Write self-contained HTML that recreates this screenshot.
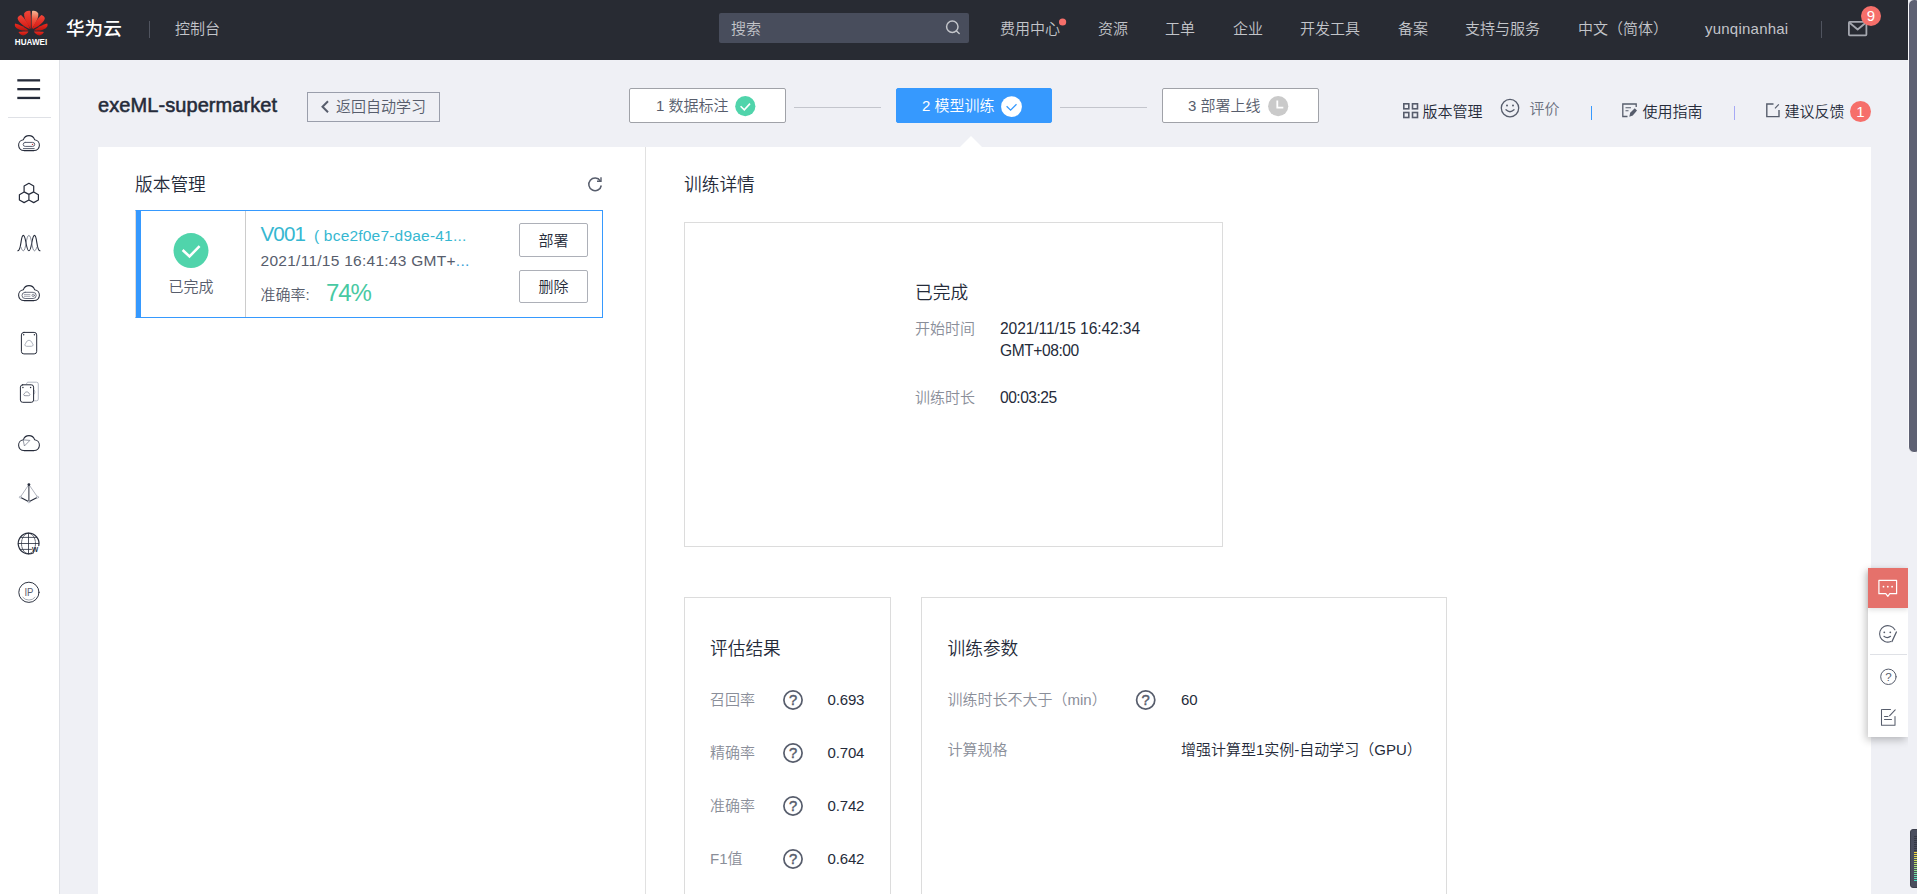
<!DOCTYPE html>
<html lang="zh-CN">
<head>
<meta charset="utf-8">
<title>ModelArts</title>
<style>
*{box-sizing:border-box;margin:0;padding:0}
html,body{width:1917px;height:894px;overflow:hidden;background:#eff0f5}
body{position:relative;font-family:"Liberation Sans","Noto Sans CJK SC",sans-serif;font-size:15px;color:#252b3a;line-height:20px;font-weight:350}
.a{position:absolute;white-space:nowrap}
svg{position:absolute;overflow:visible}
/* header */
#hdr{position:absolute;left:0;top:0;width:1908px;height:60px;background:#282b33}
#hdr .t{position:absolute;top:19px;height:20px;line-height:20px;color:#c3c5ca;white-space:nowrap}
#search{position:absolute;left:719px;top:13px;width:250px;height:30px;background:#484d5c;border-radius:2px}
.badge{position:absolute;border-radius:50%;background:#f66f6a;color:#fff;text-align:center}
/* sidebar */
#side{position:absolute;left:0;top:60px;width:60px;height:834px;background:#fff;border-right:1px solid #dfe1e6}
/* main */
#panel{position:absolute;left:98px;top:147px;width:1773px;height:747px;background:#fff}
.step{position:absolute;top:88px;height:35px;border:1px solid #a0a2a8;border-radius:2px;background:#fff}
.box{position:absolute;border:1px solid #dcdcdc;background:#fff}
.lbl{color:#8a8e99}
.btn{position:absolute;border:1px solid #adb0b8;border-radius:2px;background:#fff;text-align:center}
</style>
</head>
<body>
<!-- page sections are inserted below -->
<div id="hdr">
<div class="t" style="left:66px;top:18px;font-size:18.600px;font-weight:500;color:#fff;line-height:22px">华为云</div>
<div class="t" style="left:175px">控制台</div>
<div id="search"><div class="t" style="left:12px;top:5.500px;color:#c3c5ca">搜索</div></div>
<div class="t" style="left:1000px">费用中心</div>
<div class="t" style="left:1098px">资源</div>
<div class="t" style="left:1165px">工单</div>
<div class="t" style="left:1233px">企业</div>
<div class="t" style="left:1300px">开发工具</div>
<div class="t" style="left:1398px">备案</div>
<div class="t" style="left:1465px">支持与服务</div>
<div class="t" style="left:1578px">中文（简体）</div>
<div class="t" style="left:1705px;letter-spacing:0.230px">yunqinanhai</div>
<svg width="1908" height="60" viewBox="0 0 1908 60" style="left:0;top:0">
<defs>
<linearGradient id="lg1" x1="0" y1="0" x2="0" y2="1"><stop offset="0" stop-color="#f0463a"/><stop offset="1" stop-color="#d5160f"/></linearGradient>
<linearGradient id="lg2" x1="0" y1="0" x2="0" y2="1"><stop offset="0" stop-color="#f7b896"/><stop offset="0.45" stop-color="#ee5a42"/><stop offset="1" stop-color="#e01f14"/></linearGradient>
<linearGradient id="lg3" x1="0" y1="0" x2="0" y2="1"><stop offset="0" stop-color="#ec2c20"/><stop offset="1" stop-color="#b5140f"/></linearGradient>
</defs>
<g>
<path fill="url(#lg1)" d="M30.700,29 C28.300,25.500 23.200,18 24.200,13.600 C24.800,11.300 28.200,10.200 30.400,11 C31,16 31,24 30.700,29Z"/>
<path fill="url(#lg2)" d="M31.800,29 C34.200,25.500 39.200,18 38.200,13.600 C37.600,11.300 34.200,10.200 32.100,11 C31.500,16 31.500,24 31.800,29 Z"/>
<path fill="url(#lg1)" d="M29.900,29.300 C25,27.200 18.200,22.500 17.600,18.600 C17.600,16.600 19.400,15.300 21,15 C24.500,18 28.600,24 29.900,29.300Z"/>
<path fill="url(#lg1)" d="M32.50,29.30 C37.40,27.20 44.20,22.50 44.80,18.60 C44.80,16.60 43.00,15.30 41.40,15.00 C37.90,18.00 33.80,24.00 32.50,29.30 Z"/>
<path fill="url(#lg3)" d="M28.600,30.600 C24,31.200 17.200,30.200 15.200,26.600 C14.700,25.400 14.700,24.200 15.200,23.400 C19,24.200 26.200,27.800 28.600,30.600Z"/>
<path fill="url(#lg3)" d="M33.80,30.60 C38.40,31.20 45.20,30.20 47.20,26.60 C47.70,25.40 47.70,24.20 47.20,23.40 C43.40,24.20 36.20,27.80 33.80,30.60 Z"/>
<path fill="url(#lg3)" d="M28.500,31.600 C25,31.300 21,31.500 18.500,32.100 C19.300,33.900 21,35.200 23,35.400 C25.400,35.400 27.800,33.300 28.500,31.600Z"/>
<path fill="url(#lg3)" d="M33.90,31.60 C37.40,31.30 41.40,31.50 43.90,32.10 C43.10,33.90 41.40,35.20 39.40,35.40 C37.00,35.40 34.60,33.30 33.90,31.60 Z"/>
</g>
<text x="14.8" y="45.1" font-family="Liberation Sans,sans-serif" font-weight="bold" font-size="9.2" fill="#fff" textLength="32.4" lengthAdjust="spacingAndGlyphs">HUAWEI</text>
<rect x="149" y="21" width="1" height="17" fill="#50545f"/>
<rect x="1821" y="21" width="1" height="17" fill="#50545f"/>
<g fill="none" stroke="#c3c5ca" stroke-width="1.5"><circle cx="952.3" cy="26.8" r="5.7"/><path d="M956.5,31 L959.2,33.5" stroke-linecap="round"/></g>
<g fill="none" stroke="#a4a7af" stroke-width="1.8" stroke-linejoin="round"><rect x="1848.9" y="21.9" width="17.5" height="13.4" rx="0.8"/><path d="M1849.300,22.500 L1857.650,29.500 L1866,22.500"/></g>
<circle cx="1062.600" cy="22" r="3.600" fill="#f66f6a"/>
</svg>
<div class="badge" style="left:1861px;top:6px;width:20px;height:20px;line-height:20px;font-size:15px">9</div>
</div>
<div id="side">
<svg width="60" height="834" viewBox="0 60 60 834" style="left:0;top:0" fill="none" stroke="#252b3a" stroke-width="1.050" stroke-linejoin="round" stroke-linecap="round">
<g stroke="none" fill="#252b3a"><rect x="17.300" y="79.200" width="22.800" height="2.300"/><rect x="17.300" y="88" width="22.800" height="2.300"/><rect x="17.300" y="96.800" width="22.800" height="2.300"/></g>
<rect x="8" y="117" width="43" height="1" fill="#dfe1e6" stroke="none"/>
<!-- 1 cloud server -->
<path d="M23.9,150.60 A5.5,5.5 0 0 1 23.4,139.65 A5.9,5.9 0 0 1 34.6,139.65 A5.5,5.5 0 0 1 34.1,150.60 Z"/>
<rect x="23.200" y="142.400" width="11.500" height="4" rx="2" stroke-width="1" stroke="#5a6070"/>
<path d="M23.400,148.600 H34.200" stroke-width="1" stroke="#5a6070"/>
<circle cx="32.500" cy="144.400" r="0.700" fill="#c03030" stroke="none"/>
<!-- 2 hexagons -->
<path d="M28.900,183.300 L33.700,186 V191.900 L28.900,194.400 L24.100,191.900 V186 Z M24.100,191.900 L19.400,194.700 V200 L24.100,202.600 L28.900,200 V194.400 M33.700,191.900 L38.400,194.700 V200 L33.700,202.600 L28.900,200" stroke-width="1.200"/>
<!-- 3 waves -->
<path d="M17.800,250.800 C21.500,250.800 20.500,235.400 23.300,235.400 C26.100,235.400 26,250.800 28.900,250.800 C31.800,250.800 31.700,235.400 34.500,235.400 C37.300,235.400 36.300,250.800 40,250.800" stroke-width="1.100"/>
<path d="M20.800,247 C22,250 22.600,250.800 23.300,250.800 C26.100,250.800 26,235.400 28.900,235.400 C31.800,235.400 31.700,250.800 34.500,250.800 C35.200,250.800 35.800,250 37,247" stroke-width="0.800" stroke="#6a7080"/>
<!-- 4 cloud disk -->
<path d="M23.9,300.60 A5.5,5.5 0 0 1 23.4,289.65 A5.9,5.9 0 0 1 34.6,289.65 A5.5,5.5 0 0 1 34.1,300.60 Z"/>
<rect x="22" y="292.300" width="14.200" height="6.200" rx="3.100" stroke-width="0.900" stroke="#5a6070"/>
<path d="M24.300,294.600 H30 M24.300,296.300 H30" stroke-width="0.700" stroke="#7a8090"/>
<circle cx="33.200" cy="295.400" r="1.200" stroke-width="0.700" stroke="#5a6070"/>
<!-- 5 disk -->
<rect x="21.400" y="332.400" width="15.300" height="21.500" rx="2.500" stroke-width="1"/>
<circle cx="23.700" cy="334.700" r="0.700" fill="#252b3a" stroke="none"/><circle cx="34.400" cy="334.700" r="0.700" fill="#252b3a" stroke="none"/>
<path d="M26.200,346.300 C24.600,346.300 24.300,344 25.800,343.300 C26.300,341.300 27.800,340.300 29,340.300 C30.200,340.300 31.700,341.300 32.200,343.300 C33.700,344 33.400,346.300 31.800,346.300 Z" stroke-width="0.700" stroke="#8a90a0"/>
<!-- 6 double disk -->
<path d="M26.500,383.800 L27.500,382.200 H36.500 Q38.300,382.200 38.300,384 V399 Q38.300,400.800 36.500,400.800 H34.400" stroke-width="0.800" stroke="#a0a6b4"/>
<path d="M34.400,390.200 Q35.800,392 34.400,394" stroke-width="0.700" stroke="#a0a6b4"/>
<rect x="20.400" y="384.800" width="13.200" height="17.500" rx="2.300" stroke-width="1"/>
<circle cx="22.900" cy="387.500" r="0.700" fill="#252b3a" stroke="none"/><circle cx="30.600" cy="387.500" r="0.700" fill="#252b3a" stroke="none"/>
<path d="M24.600,395.700 C23.500,395.700 23.300,394.200 24.300,393.700 C24.800,392.500 25.800,391.900 26.800,391.900 C27.800,391.900 28.800,392.500 29.300,393.700 C30.300,394.200 30.100,395.700 29,395.700 Z" stroke-width="0.700" stroke="#6a7080"/>
<!-- 7 cloud arrow -->
<path d="M23.9,450.60 A5.5,5.5 0 0 1 23.4,439.65 A5.9,5.9 0 0 1 34.6,439.65 A5.5,5.5 0 0 1 34.1,450.60 Z"/>
<path d="M23.500,439.900 L29.900,440.400 L24.700,445.700 Z" stroke-width="0.700" stroke="#6a7080"/>
<!-- 8 pyramid -->
<path d="M28.900,484.500 L20.300,497.200 M28.900,484.500 L37.600,497.200" stroke-width="0.600" stroke="#7a8090"/>
<path d="M28.900,484.500 V501.800" stroke-width="1"/>
<path d="M20.300,497.200 L28.900,501.800 L37.600,497.200" stroke-width="1.100"/>
<circle cx="28.900" cy="484.600" r="1.400" fill="#252b3a" stroke="none"/>
<g fill="#fff" stroke-width="0.500" stroke="#8a90a0"><circle cx="20.300" cy="497.200" r="1"/><circle cx="37.600" cy="497.200" r="1"/><circle cx="28.900" cy="501.900" r="1"/></g>
<!-- 9 globe -->
<path d="M33.500,552.700 A10.400,10.400 0 1 1 38.800,545.600" stroke-width="1.200"/>
<ellipse cx="28.500" cy="543.500" rx="7" ry="10.200" stroke-width="0.700" stroke-dasharray="2.500 1"/>
<path d="M28.500,533.200 V553.800 M18.300,543.500 H38.700 M20.300,537.400 H36.700 M20.300,549.400 H31.500" stroke-width="0.800"/>
<text x="32" y="552.400" font-family="Liberation Sans,sans-serif" font-size="6.500" font-weight="bold" fill="#252b3a" stroke="none">W</text>
<!-- 10 IP -->
<circle cx="28.900" cy="592.300" r="10.100" stroke-width="0.950"/>
<path d="M22.800,597.300 A7.800,7.800 0 0 0 35,597.300" stroke-width="0.600" stroke="#6a7080"/>
<text x="28.900" y="596" text-anchor="middle" font-family="Liberation Sans,sans-serif" font-size="10.500" fill="#5a6070" stroke="none" textLength="9" lengthAdjust="spacingAndGlyphs">IP</text>
</svg>
</div>
<div id="main">
<div class="a" style="left:98px;top:93px;font-size:20px;line-height:24px;letter-spacing:0.080px;-webkit-text-stroke:0.550px #252b3a">exeML-supermarket</div>
<div class="btn" style="left:307px;top:92px;width:133px;height:30px;border-color:#9a9eab;background:transparent;border-radius:0"></div>
<svg width="10" height="14" viewBox="0 0 10 14" style="left:320px;top:100px" fill="none" stroke="#575d6c" stroke-width="2"><path d="M8,1.300 L2.500,6.800 L8,12.300"/></svg>
<div class="a" style="left:336px;top:97px;color:#575d6c">返回自动学习</div>
<!-- steps -->
<div class="step" style="left:629px;width:157px"></div>
<div class="a" style="left:656px;top:96px;color:#575d6c">1 数据标注</div>
<svg width="21" height="21" viewBox="0 0 21 21" style="left:735px;top:96px"><circle cx="10.300" cy="10.200" r="10.100" fill="#50d4ab"/><path d="M5.600,10.200 L9.300,13.800 L15,7.600" fill="none" stroke="#fff" stroke-width="1.600"/></svg>
<div class="a" style="left:794px;top:107px;width:87px;height:1px;background:#c3c5cc"></div>
<div class="step" style="left:896px;width:156px;background:#3699fe;border-color:#3699fe"></div>
<div class="a" style="left:922px;top:96px;color:#fff">2 模型训练</div>
<svg width="22" height="22" viewBox="0 0 22 22" style="left:1001px;top:95.500px"><circle cx="10.500" cy="10.700" r="10.400" fill="#fff"/><path d="M5.600,10.300 L9.600,14.100 L15.500,8.200" fill="none" stroke="#3699fe" stroke-width="1.300"/></svg>
<div class="a" style="left:1060px;top:107px;width:87px;height:1px;background:#c3c5cc"></div>
<div class="step" style="left:1162px;width:157px"></div>
<div class="a" style="left:1188px;top:96px;color:#575d6c">3 部署上线</div>
<svg width="21" height="21" viewBox="0 0 21 21" style="left:1267.500px;top:96px"><circle cx="10.200" cy="10.200" r="10.100" fill="#cacaca"/><path d="M9.300,4.500 V11.700 H15.300" fill="none" stroke="#fff" stroke-width="1.800"/></svg>
<svg width="24" height="12" viewBox="0 0 24 12" style="left:958.500px;top:135.500px"><path d="M0,12 L12,0 L24,12 Z" fill="#fff"/></svg>
<!-- actions -->
<svg width="16" height="16" viewBox="0 0 16 16" style="left:1402.500px;top:102.500px" fill="none" stroke="#575d6c" stroke-width="1.600"><rect x="0.800" y="0.800" width="5" height="5"/><rect x="9.500" y="0.800" width="5" height="5"/><rect x="0.800" y="9.500" width="5" height="5"/><rect x="9.500" y="9.500" width="5" height="5"/></svg>
<div class="a" style="left:1422.500px;top:101.500px">版本管理</div>
<svg width="20" height="20" viewBox="0 0 20 20" style="left:1499.500px;top:98px" fill="none" stroke="#575d6c" stroke-width="1.300"><circle cx="10" cy="10.100" r="8.700"/><path d="M6,11.800 Q10,15.600 14,11.800" stroke-linecap="round"/><circle cx="7" cy="7.600" r="1" fill="#575d6c" stroke="none"/><circle cx="13" cy="7.600" r="1" fill="#575d6c" stroke="none"/></svg>
<div class="a" style="left:1529.500px;top:98.500px;color:#6b7180">评价</div>
<div class="a" style="left:1591px;top:106px;width:1px;height:14px;background:#3699fe"></div>
<svg width="16" height="15" viewBox="0 0 16 15" style="left:1622px;top:103px" fill="none" stroke="#575d6c" stroke-width="1.300"><path d="M14.200,4 V1 H0.800 V13.500 H5.500"/><path d="M3.500,4.800 H9 M3.500,7.800 H6.500" stroke-width="1.100"/><path d="M7.300,13.800 L8.200,9.800 L12.800,5.200 L15,7.400 L10.800,12.500 Z" fill="#575d6c" stroke="none"/></svg>
<div class="a" style="left:1642.500px;top:101.500px">使用指南</div>
<div class="a" style="left:1733.500px;top:106px;width:1px;height:14px;background:#a6a9f5"></div>
<svg width="15" height="15" viewBox="0 0 15 15" style="left:1766px;top:103px" fill="none" stroke="#575d6c" stroke-width="1.400"><path d="M7.500,1 H0.800 V13.600 H13 V7"/><path d="M9,5.300 L12.800,1.300" stroke-width="1.200"/></svg>
<div class="a" style="left:1784.500px;top:101.500px">建议反馈</div>
<div class="badge" style="left:1850px;top:101px;width:21px;height:21px;line-height:21px;font-size:15px">1</div>
</div>
<div id="panel">
<div class="a" style="left:547px;top:0;width:1px;height:747px;background:#e1e1e1"></div>
<!-- left -->
<div class="a" style="left:37px;top:26px;font-size:17.700px;line-height:24px">版本管理</div>
<svg width="16" height="16" viewBox="0 0 16 16" style="left:489px;top:29px" fill="none" stroke="#575d6c" stroke-width="1.500"><path d="M13.300,4.800 A6.300,6.300 0 1 0 14.300,9.500"/><path d="M10,5.300 H14 V1.200" stroke-width="1.400"/></svg>
<div class="a" style="left:37px;top:63px;width:468px;height:108px;border:1px solid #3699fe;border-left-color:#e2dcd8;background:#fff"></div>
<div class="a" style="left:38px;top:63px;width:5px;height:108px;background:#3699fe"></div>
<div class="a" style="left:147px;top:64px;width:1px;height:106px;background:#ccc"></div>
<svg width="36" height="36" viewBox="0 0 36 36" style="left:75px;top:86px"><circle cx="18" cy="17.600" r="17.500" fill="#50d4ab"/><path d="M9.600,17 L16.500,23.500 L26.600,13.200" fill="none" stroke="#fff" stroke-width="2.500"/></svg>
<div class="a" style="left:70.500px;top:129.500px;color:#575d6c">已完成</div>
<div class="a" style="left:162.500px;top:75px;font-size:20.600px;line-height:24px;color:#36b7d1;letter-spacing:-0.900px">V001</div>
<div class="a" style="left:216px;top:79px;font-size:15.500px;letter-spacing:0.200px;color:#36b7d1">( bce2f0e7-d9ae-41...</div>
<div class="a" style="left:162.500px;top:104px;font-size:15.500px;letter-spacing:0.270px;color:#575d6c">2021/11/15 16:41:43 GMT+<span style="color:#36a0d8">...</span></div>
<div class="a" style="left:162.500px;top:138px;color:#575d6c">准确率:</div>
<div class="a" style="left:228px;top:132px;font-size:24px;line-height:28px;color:#48c9a3;letter-spacing:-1.100px">74%</div>
<div class="btn" style="left:421px;top:76px;width:69px;height:34px"></div>
<div class="a" style="left:440.500px;top:84px">部署</div>
<div class="btn" style="left:421px;top:123px;width:69px;height:33px"></div>
<div class="a" style="left:440.500px;top:129.500px">删除</div>
<!-- right -->
<div class="a" style="left:586px;top:26px;font-size:17.700px;line-height:24px">训练详情</div>
<div class="box" style="left:586px;top:75px;width:539px;height:325px"></div>
<div class="a" style="left:817px;top:133.500px;font-size:17.700px;line-height:24px">已完成</div>
<div class="a lbl" style="left:817px;top:171.500px">开始时间</div>
<div class="a" style="left:902px;top:172px;font-size:15.600px;letter-spacing:-0.100px">2021/11/15 16:42:34</div>
<div class="a" style="left:902px;top:194px;font-size:15.600px;letter-spacing:-0.450px">GMT+08:00</div>
<div class="a lbl" style="left:817px;top:240.500px">训练时长</div>
<div class="a" style="left:902px;top:241px;font-size:15.600px;letter-spacing:-0.500px">00:03:25</div>
<div class="box" style="left:586px;top:450px;width:207px;height:320px"></div>
<div class="a" style="left:612px;top:489.500px;font-size:17.700px;line-height:24px">评估结果</div>
<div class="a lbl" style="left:612px;top:543px">召回率</div>
<div class="a lbl" style="left:612px;top:596px">精确率</div>
<div class="a lbl" style="left:612px;top:649px">准确率</div>
<div class="a lbl" style="left:612px;top:702px">F1值</div>
<div class="a" style="left:729.500px;top:543px;letter-spacing:-0.150px">0.693</div>
<div class="a" style="left:729.500px;top:596px;letter-spacing:-0.150px">0.704</div>
<div class="a" style="left:729.500px;top:649px;letter-spacing:-0.150px">0.742</div>
<div class="a" style="left:729.500px;top:702px;letter-spacing:-0.150px">0.642</div>
<div class="box" style="left:823px;top:450px;width:526px;height:320px"></div>
<div class="a" style="left:849.500px;top:489.500px;font-size:17.700px;line-height:24px">训练参数</div>
<div class="a lbl" style="left:849.500px;top:543px">训练时长不大于（min）</div>
<div class="a" style="left:1083px;top:543px;letter-spacing:-0.150px">60</div>
<div class="a lbl" style="left:849.500px;top:592.500px">计算规格</div>
<div class="a" style="left:1083px;top:592.500px">增强计算型1实例-自动学习（GPU）</div>
<svg width="1773" height="747" viewBox="98 147 1773 747" style="left:0;top:0" font-family="Liberation Sans,sans-serif">
<g transform="translate(793,700)"><circle cx="0" cy="0" r="9.100" fill="none" stroke="#575d6c" stroke-width="1.700"/><text x="0" y="5.300" text-anchor="middle" font-size="14.800" fill="#575d6c" stroke="#575d6c" stroke-width="0.450">?</text></g>
<g transform="translate(793,753)"><circle cx="0" cy="0" r="9.100" fill="none" stroke="#575d6c" stroke-width="1.700"/><text x="0" y="5.300" text-anchor="middle" font-size="14.800" fill="#575d6c" stroke="#575d6c" stroke-width="0.450">?</text></g>
<g transform="translate(793,806)"><circle cx="0" cy="0" r="9.100" fill="none" stroke="#575d6c" stroke-width="1.700"/><text x="0" y="5.300" text-anchor="middle" font-size="14.800" fill="#575d6c" stroke="#575d6c" stroke-width="0.450">?</text></g>
<g transform="translate(793,859)"><circle cx="0" cy="0" r="9.100" fill="none" stroke="#575d6c" stroke-width="1.700"/><text x="0" y="5.300" text-anchor="middle" font-size="14.800" fill="#575d6c" stroke="#575d6c" stroke-width="0.450">?</text></g>
<g transform="translate(1145.700,700)"><circle cx="0" cy="0" r="9.100" fill="none" stroke="#575d6c" stroke-width="1.700"/><text x="0" y="5.300" text-anchor="middle" font-size="14.800" fill="#575d6c" stroke="#575d6c" stroke-width="0.450">?</text></g>
</svg>
</div>
<!--MAIN-->
<div id="float">
<div class="a" style="left:0;top:0;width:1908px;height:894px;overflow:hidden">
<div class="a" style="left:1868px;top:568px;width:40px;height:169px;background:#fff;box-shadow:-2px 3px 8px rgba(0,0,0,0.240)"></div>
<div class="a" style="left:1868px;top:568px;width:40px;height:40px;background:#e5716b;box-shadow:0 2px 5px rgba(0,0,0,0.120)"></div>
<div class="a" style="left:1869.500px;top:654px;width:37px;height:1px;background:#dfe1e6"></div>
<svg width="40" height="169" viewBox="1868 568 40 169" style="left:1868px;top:568px" fill="none" stroke="#575d6c" stroke-width="1.100" stroke-linecap="round" stroke-linejoin="round">
<path d="M1878.900,580.400 H1896.600 V593.700 H1889.800 L1887.800,596.300 L1885.800,593.700 H1878.900 Z" stroke="#fff" stroke-width="1.200"/>
<g fill="#fff" stroke="none"><circle cx="1883.500" cy="586.700" r="0.900"/><circle cx="1887.800" cy="586.700" r="0.900"/><circle cx="1892.100" cy="586.700" r="0.900"/></g>
<path d="M1894.900,629.800 A8.200,8.200 0 1 0 1890.800,641.500"/>
<path d="M1896.400,632 L1892,641.600" stroke-width="1.300"/>
<path d="M1883.900,636.300 Q1887.300,638.900 1890.600,636.300"/>
<g fill="#575d6c" stroke="none"><circle cx="1884.300" cy="632.300" r="0.900"/><circle cx="1890.300" cy="632.300" r="0.900"/></g>
<circle cx="1888.400" cy="676.800" r="7.700" stroke-width="1"/>
<path d="M1882.500,709.500 H1890.500 M1895,716.500 V725.200 H1881.500 V709.500 M1889.500,715.800 L1895.200,709.800" stroke-width="1.050"/>
<path d="M1884.500,716.500 H1888 M1884.500,719.500 H1891.500" stroke-width="1"/>
<text x="1888.400" y="681.200" text-anchor="middle" font-family="Liberation Sans,sans-serif" font-size="11.500" fill="#575d6c" stroke="none">?</text>
</svg>
</div>
<div class="a" style="left:1908px;top:-1px;width:13px;height:453.500px;background:#5e6173;border:1px solid #fafafc;border-radius:6px"></div>
<div class="a" style="left:1910px;top:829px;width:12px;height:59px;background:#4a4e5e;border-radius:3px;border:1px solid #3c3f4c"></div>
<div class="a" style="left:1914px;top:836px;width:4px;height:16px;background:repeating-linear-gradient(to bottom,#353845 0,#353845 1px,transparent 1px,transparent 2px)"></div>
<div class="a" style="left:1914px;top:852px;width:4px;height:30px;background:linear-gradient(to bottom,#f5d63a,#b8e468 40%,#6fe0a0 75%,#3edcc8);-webkit-mask:repeating-linear-gradient(to bottom,#000 0,#000 1px,transparent 1px,transparent 2px);mask:repeating-linear-gradient(to bottom,#000 0,#000 1px,transparent 1px,transparent 2px)"></div>
</div>
</body>
</html>
